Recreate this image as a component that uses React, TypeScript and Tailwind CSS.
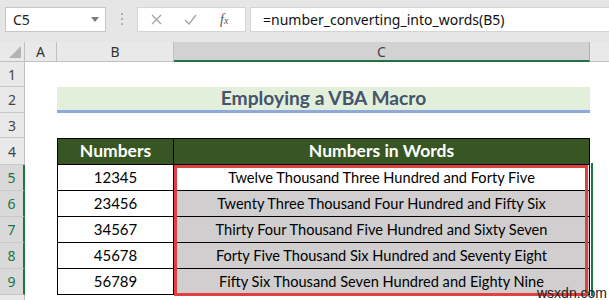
import React from 'react';

const rows = [
  { n: 5, num: '12345', words: 'Twelve Thousand Three Hundred and Forty Five', fill: false },
  { n: 6, num: '23456', words: 'Twenty Three Thousand Four Hundred and Fifty Six', fill: true },
  { n: 7, num: '34567', words: 'Thirty Four Thousand Five Hundred and Sixty Seven', fill: true },
  { n: 8, num: '45678', words: 'Forty Five Thousand Six Hundred and Seventy Eight', fill: true },
  { n: 9, num: '56789', words: 'Fifty Six Thousand Seven Hundred and Eighty Nine', fill: true },
];

function RowHead({ n, selected }: { n?: number; selected?: boolean }) {
  return (
    <div
      className={`w-[25px] shrink-0 flex items-center justify-center border-b border-[#c8c8c8] text-[14px] font-['Noto_Sans',sans-serif] ${
        selected
          ? 'bg-[#d9d9d9] text-[#217346] border-r-2 border-r-[#217346]'
          : 'bg-[#e9e9e9] text-[#444] border-r border-r-[#c0c0c0]'
      }`}
    >
      {n}
    </div>
  );
}

export default function App() {
  return (
    <div className="relative w-[609px] h-[300px] overflow-hidden bg-white font-['Lato',sans-serif]">
      {/* formula bar */}
      <div className="h-[42px] bg-[#e6e6e6] flex items-start pt-[7px] font-['Noto_Sans',sans-serif]">
        <div className="ml-[5px] w-[101px] h-[25px] bg-white border border-[#c6c6c6] flex items-center justify-between pl-[7px] pr-[6px]">
          <span className="text-[14px] text-[#222]">C5</span>
          <svg width="8" height="5" viewBox="0 0 8 5">
            <path d="M0 0 L8 0 L4 5 Z" fill="#7a7a7a" />
          </svg>
        </div>
        <div className="ml-[15px] mt-[6px] flex flex-col gap-[3px]">
          <div className="w-[2px] h-[2px] bg-[#b0b0b0]" />
          <div className="w-[2px] h-[2px] bg-[#b0b0b0]" />
          <div className="w-[2px] h-[2px] bg-[#b0b0b0]" />
        </div>
        <div className="ml-[14px] w-[109px] h-[25px] bg-white border border-[#d4d4d4] flex items-center">
          <svg className="ml-[13px]" width="11" height="11" viewBox="0 0 11 11">
            <path d="M1 1 L10 10 M10 1 L1 10" stroke="#a6a6a6" strokeWidth="1.4" />
          </svg>
          <svg className="ml-[22px]" width="13" height="11" viewBox="0 0 13 11">
            <path d="M1 6 L5 10 L12 1" stroke="#a6a6a6" strokeWidth="1.4" fill="none" />
          </svg>
          <span className="ml-[23px] text-[14px] italic text-[#555] font-['Liberation_Serif',serif]">
            f<span className="text-[10px]">x</span>
          </span>
        </div>
        <div className="ml-[4px] flex-1 h-[25px] bg-white border border-[#d4d4d4] border-r-0 flex items-center pl-[12px]">
          <span className="text-[14px] text-[#111]">=number_converting_into_words(B5)</span>
        </div>
      </div>

      {/* column headers */}
      <div className="h-[20px] flex text-[14px] text-[#333] font-['Noto_Sans',sans-serif]">
        <div className="w-[25px] bg-[#e9e9e9] border-r border-b border-[#c0c0c0] flex items-end justify-end pr-[3px] pb-[3px]">
          <svg width="12" height="12" viewBox="0 0 12 12">
            <path d="M12 0 L12 12 L0 12 Z" fill="#b4b4b4" />
          </svg>
        </div>
        <div className="w-[32px] bg-[#e9e9e9] border-r border-b border-[#c0c0c0] flex items-center justify-center">A</div>
        <div className="w-[117px] bg-[#e9e9e9] border-r border-b border-[#c0c0c0] flex items-center justify-center">B</div>
        <div className="w-[416px] bg-[#d2d2d2] border-r border-[#b0b0b0] border-b-2 border-b-[#217346] flex items-center justify-center text-[#444]">C</div>
        <div className="flex-1 bg-[#e9e9e9] border-b border-[#c0c0c0]" />
      </div>

      {/* row 1 */}
      <div className="h-[25px] flex">
        <RowHead n={1} />
      </div>

      {/* row 2 - title */}
      <div className="h-[26px] flex">
        <RowHead n={2} />
        <div className="w-[32px]" />
        <div className="w-[533px] bg-[#e2efda] border-b-[3px] border-[#8ea9db] flex items-center justify-center">
          <span className="text-[19.2px] font-bold text-[#44546a]">Employing a VBA Macro</span>
        </div>
      </div>

      {/* row 3 */}
      <div className="h-[25px] flex">
        <RowHead n={3} />
      </div>

      {/* row 4 - table header */}
      <div className="h-[27px] flex">
        <RowHead n={4} />
        <div className="w-[32px]" />
        <div className="w-[117px] bg-[#375623] border border-black flex items-center justify-center text-white text-[17.5px] font-bold">
          Numbers
        </div>
        <div className="w-[416px] bg-[#375623] border-y border-r border-black flex items-center justify-center text-white text-[17.5px] font-bold">
          Numbers in Words
        </div>
      </div>

      {/* data rows */}
      {rows.map((r) => (
        <div key={r.n} className="h-[26px] flex">
          <RowHead n={r.n} selected />
          <div className="w-[32px]" />
          <div className="w-[117px] border-x border-b border-black flex items-center justify-center text-[15px] text-black">
            {r.num}
          </div>
          <div
            className={`w-[416px] border-r border-b border-black flex items-center justify-center text-[14.6px] text-black ${
              r.fill ? 'bg-[#d0cece]' : 'bg-white'
            }`}
          >
            {r.words}
          </div>
        </div>
      ))}

      {/* row 10, only its top edge shows */}
      <div className="h-[26px] flex">
        <RowHead />
      </div>

      {/* selection + highlight */}
      <div className="absolute left-[591px] top-[163px] w-[2px] h-[133px] bg-[#217346]" />
      <div className="absolute left-[174px] top-[165px] w-[414px] h-[131px] border-[3px] border-[#e0403e]" />
      <div className="absolute left-[537px] top-[283px] text-[14px] text-[#222] font-['Liberation_Sans',sans-serif]">
        wsxdn.com
      </div>
    </div>
  );
}
